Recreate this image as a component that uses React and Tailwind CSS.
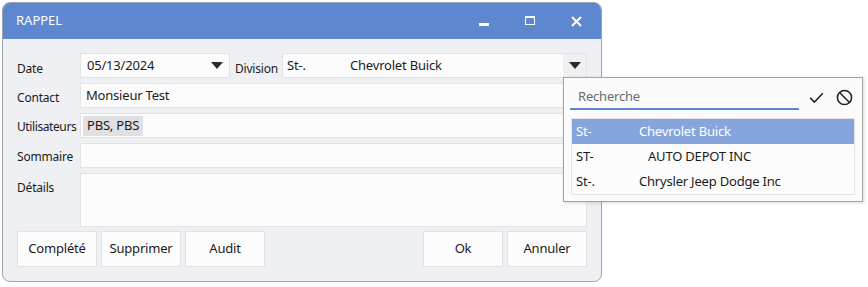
import React from "react";

const Tri = () => (
  <svg width="12" height="7" viewBox="0 0 12 7"><path d="M0 0H12L6 7Z" fill="#2b2b2b" /></svg>
);

const inputCls = "h-[25px] bg-[#fcfcfd] border border-[#e2e3e7] flex items-center";

export default function App() {
  return (
    <div className="relative w-[868px] h-[287px] bg-white text-[#1b1b1b]" style={{ fontFamily: '"Noto Sans", "Open Sans", sans-serif' }}>
      <div className="absolute left-[2px] top-[2px] w-[600px] h-[280px] rounded-[8px] border border-[#9fa4ac] overflow-hidden bg-[#eff0f4] flex flex-col">
        <div className="h-[36px] bg-[#5d87cf] flex items-center pl-[13px] text-white text-[13px] shrink-0">
          <span>RAPPEL</span>
          <div className="ml-auto flex items-center h-full">
            <div className="w-[46px] h-full flex items-center justify-center">
              <div className="w-[10px] h-[3px] bg-white mt-[6px]" />
            </div>
            <div className="w-[46px] h-full flex items-center justify-center">
              <div className="w-[10px] h-[9px] border border-white border-t-[2px] -mt-[2px]" />
            </div>
            <div className="w-[46px] h-full flex items-center justify-center mr-[2px]">
              <svg width="11" height="11" viewBox="0 0 11 11"><path d="M1 1L10 10M10 1L1 10" stroke="white" strokeWidth="2" /></svg>
            </div>
          </div>
        </div>
        <div className="flex flex-col pl-[14px] pr-[14px] pt-[14px] gap-[5px] text-[13px] tracking-[-0.2px]">
          <div className="flex items-center">
            <div className="w-[63px] text-[12px] pt-[6px]">Date</div>
            <div className={inputCls + " w-[150px] pl-[6px] pr-[6px]"}>
              <span>05/13/2024</span>
              <span className="ml-auto"><Tri /></span>
            </div>
            <div className="w-[52px] text-[12px] pl-[5px] pt-[6px]">Division</div>
            <div className={inputCls + " flex-1 pl-[4px]"}>
              <span className="w-[63px]">St-.</span>
              <span>Chevrolet Buick</span>
              <span className="ml-auto w-[23px] h-full bg-[#f0f0f2] flex items-center justify-center"><Tri /></span>
            </div>
          </div>
          <div className="flex items-center">
            <div className="w-[63px] text-[12px] pt-[4px]">Contact</div>
            <div className={inputCls + " flex-1 pl-[5px]"}>Monsieur Test</div>
          </div>
          <div className="flex items-center">
            <div className="w-[63px] text-[12px] pt-[3px] whitespace-nowrap tracking-[-0.4px]">Utilisateurs</div>
            <div className={inputCls + " flex-1 pl-[2px]"}>
              <span className="bg-[#e0e0e2] h-[20px] px-[4px] flex items-center">PBS, PBS</span>
            </div>
          </div>
          <div className="flex items-center">
            <div className="w-[63px] text-[12px] pt-[2px]">Sommaire</div>
            <div className={inputCls + " flex-1"} />
          </div>
          <div className="flex items-start">
            <div className="w-[63px] text-[12px] pt-[6px]">Détails</div>
            <div className="h-[54px] flex-1 bg-[#fcfcfd] border border-[#e2e3e7]" />
          </div>
          <div className="flex items-center gap-[4px] mt-[-1px]">
            {["Complété", "Supprimer", "Audit"].map((t) => (
              <div key={t} className="w-[80px] h-[36px] bg-[#fcfcfd] border border-[#e2e3e7] flex items-center justify-center">{t}</div>
            ))}
            <div className="flex-1" />
            {["Ok", "Annuler"].map((t) => (
              <div key={t} className="w-[80px] h-[36px] bg-[#fcfcfd] border border-[#e2e3e7] flex items-center justify-center">{t}</div>
            ))}
          </div>
        </div>
      </div>

      <div className="absolute left-[563px] top-[77px] w-[300px] h-[125px] bg-[#fbfbfc] border border-[#a3a3a3] shadow-[1px_1px_3px_rgba(0,0,0,0.15)] text-[13px] tracking-[-0.2px]">
        <div className="flex items-center mt-[6px] ml-[6px]">
          <div className="w-[229px] h-[26px] border-b-2 border-[#5d87cf] flex items-center pl-[8px] pt-[2px] text-[#6b6b6b]">Recherche</div>
          <svg className="ml-[9px]" width="17" height="17" viewBox="0 0 24 24" fill="none" stroke="#222" strokeWidth="2.2"><path d="M3 12.5L9 18.5L21 6" /></svg>
          <svg className="ml-[11px]" width="17" height="17" viewBox="0 0 24 24" fill="none" stroke="#222" strokeWidth="2.2"><circle cx="12" cy="12" r="10" /><path d="M5 5L19 19" /></svg>
        </div>
        <div className="mx-[7px] mt-[8px] border border-[#e2e3e7] bg-[#fcfcfd]">
          <div className="h-[25px] bg-[#86a5dd] text-white flex items-center pl-[4px]">
            <span className="w-[63px]">St-</span><span>Chevrolet Buick</span>
          </div>
          <div className="h-[25px] flex items-center pl-[4px]">
            <span className="w-[72px]">ST-</span><span>AUTO DEPOT INC</span>
          </div>
          <div className="h-[25px] flex items-center pl-[4px]">
            <span className="w-[63px]">St-.</span><span>Chrysler Jeep Dodge Inc</span>
          </div>
        </div>
      </div>
    </div>
  );
}
